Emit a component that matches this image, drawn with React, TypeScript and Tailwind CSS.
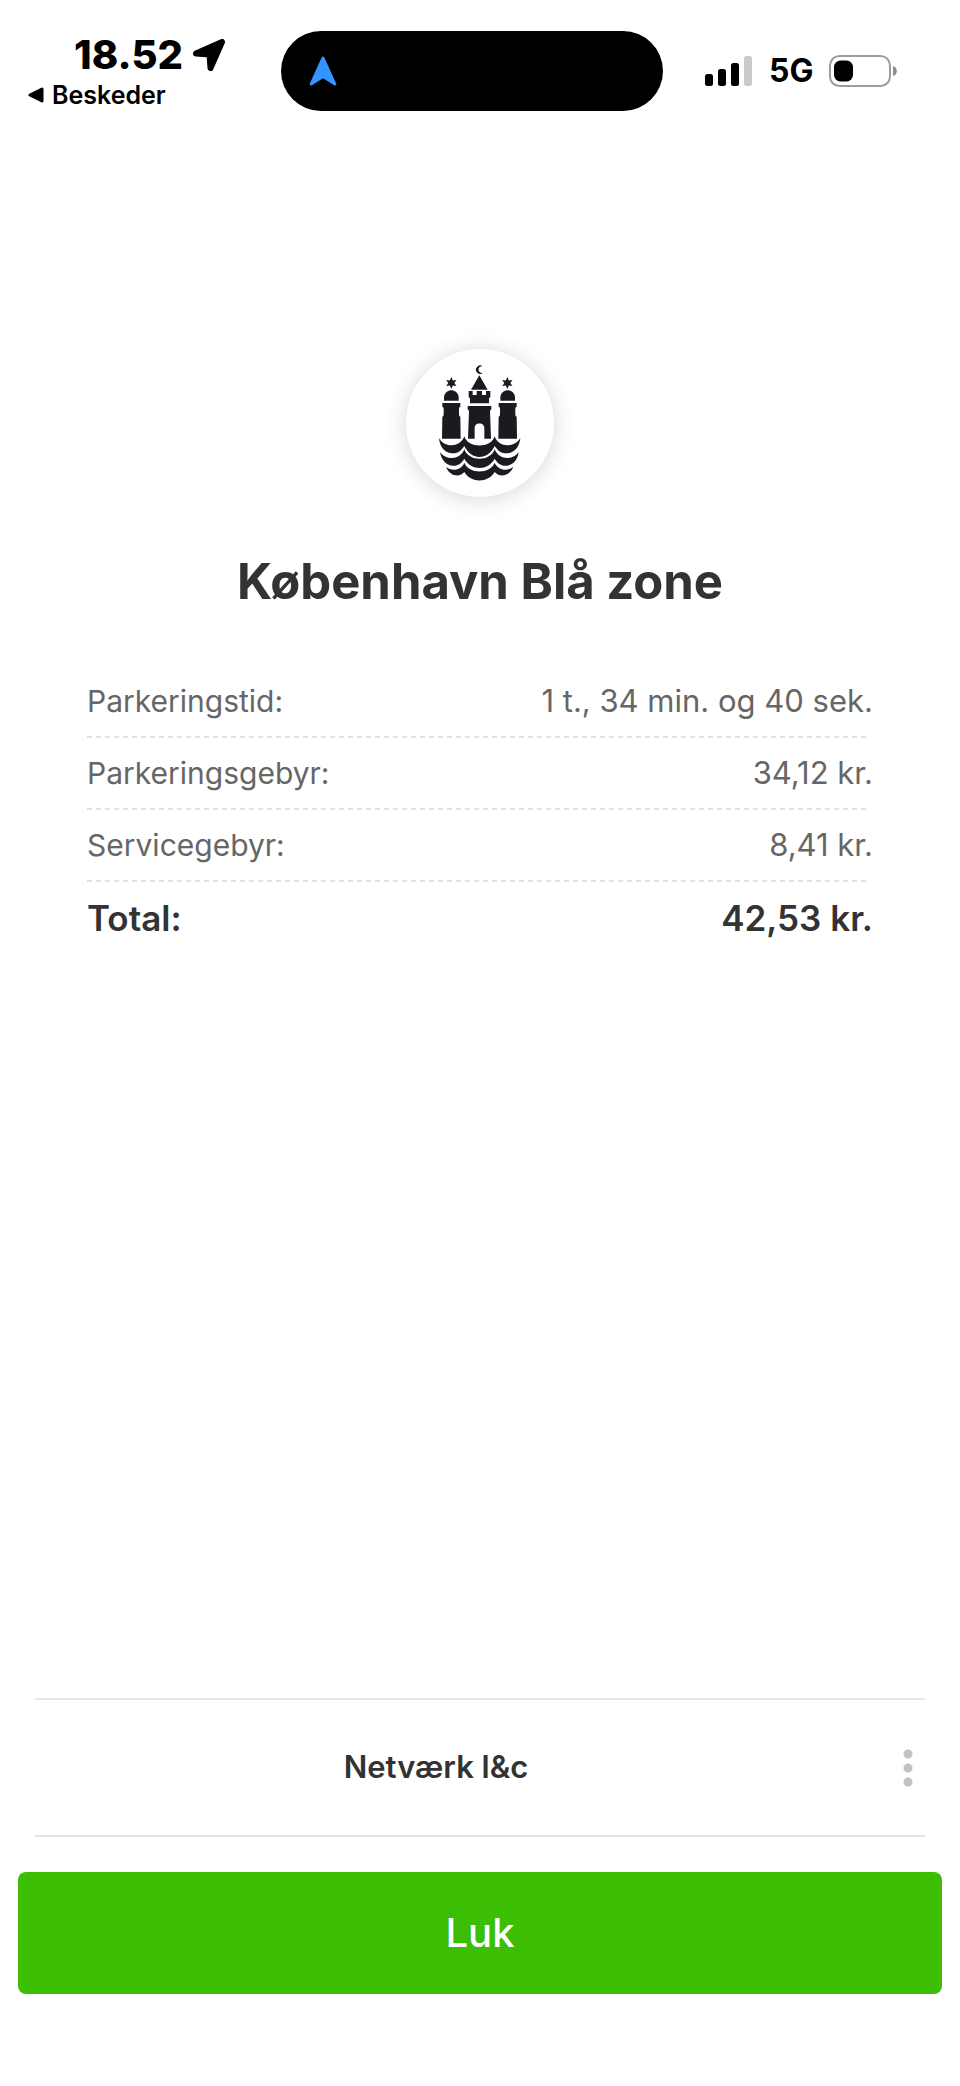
import type { ReactNode } from "react";

const fees: { label: string; value: string }[] = [
  { label: "Parkeringstid:", value: "1 t., 34 min. og 40 sek." },
  { label: "Parkeringsgebyr:", value: "34,12 kr." },
  { label: "Servicegebyr:", value: "8,41 kr." },
];

function LocationArrow() {
  return (
    <svg viewBox="0 0 32 32" className="h-8 w-8" aria-hidden="true">
      <path
        d="M29 3 L17.500 29 L16.500 15.500 L3 14.500 Z"
        fill="black"
        stroke="black"
        strokeWidth="6"
        strokeLinejoin="round"
      />
    </svg>
  );
}

function NavigationArrow() {
  return (
    <svg viewBox="0 0 28 30" className="h-[30px] w-7" aria-hidden="true">
      <path
        d="M14 2 L25.8 28 L14 20.5 L2.2 28 Z"
        fill="#3395ff"
        stroke="#3395ff"
        strokeWidth="3"
        strokeLinejoin="round"
      />
    </svg>
  );
}

function Signal() {
  return (
    <svg viewBox="0 0 48 30" className="h-[30px] w-12" aria-hidden="true">
      <rect x="0" y="18" width="8" height="12" rx="2.5" />
      <rect x="13" y="13" width="8" height="17" rx="2.5" />
      <rect x="26" y="7" width="8" height="23" rx="2.5" />
      <rect x="39" y="0" width="8" height="30" rx="2.5" fill="#cbcbcb" />
    </svg>
  );
}

function Battery() {
  return (
    <svg viewBox="0 0 68 32" className="h-8 w-[68px]" aria-hidden="true">
      <rect x="1" y="1" width="60" height="30" rx="9.5" fill="none" stroke="#9c9c9c" strokeWidth="2" />
      <rect x="5" y="5.500" width="19" height="21" rx="6.500" />
      <path d="M64 11 C69 12 69 20 64 21 Z" fill="#8c8c8c" />
    </svg>
  );
}

function Star({ x, y }: { x: number; y: number }) {
  return (
    <path
      transform={`translate(${x} ${y})`}
      d="M0 -18 L4.500 -7.500 L15.500 -9 L9 0 L15.500 9 L4.500 7.500 L0 18 L-4.500 7.500 L-15.500 9 L-9 0 L-15.500 -9 L-4.500 -7.500 Z"
    />
  );
}

function SideTower({ x }: { x: number }) {
  return (
    <g transform={`translate(${x} 0)`}>
      <path d="M-22 211 V199 C-20 187 -10 180 0 180 C10 180 20 187 22 199 V211 Z" />
      <path d="M-27 218 H27 V229 L23 232 V255 L27 260 L28 325 H-28 L-27 260 L-23 255 V232 L-27 229 Z" />
    </g>
  );
}

function CastleCrest() {
  return (
    <svg viewBox="48 56 444 444" className="h-full w-full" fill="#1b1a20" role="img" aria-label="København">
      <path d="M278 108 A12.500 12.500 0 1 0 279 127 A10 10 0 1 1 278 108 Z" />
      <Star x={184} y={158} />
      <Star x={352} y={158} />
      <SideTower x={184} />
      <SideTower x={353} />
      <path d="M268 135 L293 178 H243 Z" />
      <path d="M236 182 H248 V194 H260 V182 H276 V194 H288 V182 H301 V201 L297 204 V219 H240 V204 L236 201 Z" />
      <path d="M233 227 H304 V237 L300 241 L303 325 H283 V292 C283 275 254 275 254 292 V325 H234 L237 241 L233 237 Z" />
      <path d="M147 323 C162 352 210 354 223 318 C234 355 303 355 314 318 C326 354 375 352 391 323 C389 347 375 367 352 369 C337 370 325 364 314 347 C293 391 244 391 223 347 C212 364 200 370 185 369 C162 367 149 347 147 323 Z" />
      <path d="M150 365 C168 391 211 390 223 357 C236 395 301 395 314 357 C326 390 370 391 386 365 C383 387 371 404 350 406 C335 407 324 401 314 385 C293 422 244 422 223 385 C213 401 202 407 187 406 C166 404 154 387 150 365 Z" />
      <path d="M168 410 C186 424 214 420 223 397 C236 432 301 432 314 397 C324 420 351 424 370 410 C361 433 333 446 314 425 C294 459 243 459 223 425 C204 446 177 433 168 410 Z" />
    </svg>
  );
}

function FeeRow({ label, children }: { label: string; children: ReactNode }) {
  return (
    <div className="flex h-[70px] items-center justify-between text-[#666666]">
      <dt className="text-[30px]">{label}</dt>
      <dd className="text-[31px]">{children}</dd>
    </div>
  );
}

export default function App() {
  return (
    <div className="flex min-h-screen flex-col bg-white font-['Inter','Liberation_Sans',sans-serif] text-[#333333]">
      <header className="grid grid-cols-[281fr_382fr_297fr] pt-[31px] text-black">
        <div className="flex flex-col">
          <div className="flex h-12 items-center gap-2.5 pl-[74px]">
            <time className="text-[40px] leading-[48px] font-extrabold">18.52</time>
            <LocationArrow />
          </div>
          <a href="#beskeder" className="flex h-8 items-center gap-2 pl-7 text-[25px] leading-8 font-semibold">
            <svg viewBox="0 0 16 16" className="h-4 w-4" aria-hidden="true">
              <path d="M2 8 L14 2 V14 Z" stroke="black" strokeWidth="3" strokeLinejoin="round" />
            </svg>
            Beskeder
          </a>
        </div>
        <div className="flex h-20 items-center rounded-full bg-black pl-7">
          <NavigationArrow />
        </div>
        <div className="flex h-20 items-center pl-[42px]">
          <Signal />
          <span className="ml-4 text-[32px] leading-[40px] font-bold">5G</span>
          <span className="ml-4">
            <Battery />
          </span>
        </div>
      </header>

      <main className="flex flex-col px-[87px] pt-[238px]">
        <div className="h-[148px] w-[148px] self-center rounded-full bg-white shadow-[0_2px_22px_rgba(0,0,0,0.16)]">
          <CastleCrest />
        </div>
        <h1 className="mt-[53px] text-center text-[49px] leading-[64px] font-bold">København Blå zone</h1>
        <dl className="mt-[52px]">
          {fees.map((fee) => (
            <div key={fee.label}>
              <FeeRow label={fee.label}>{fee.value}</FeeRow>
              <div className="mr-1 h-0.5 bg-[repeating-linear-gradient(to_right,#e2e2e2_0px,#e2e2e2_5px,transparent_5px,transparent_9px)]" />
            </div>
          ))}
          <div className="flex h-[72px] items-center justify-between text-[35px] font-semibold">
            <dt>Total:</dt>
            <dd>42,53 kr.</dd>
          </div>
        </dl>
      </main>

      <footer className="mt-auto px-[18px] pb-[92px]">
        <div className="mx-[17px] flex h-[139px] items-center border-y-2 border-[#e5e5e5]">
          <p className="flex-1 text-center text-[31px] font-semibold">Netværk l&amp;c</p>
          <button type="button" aria-label="Flere valg" className="flex h-16 w-[88px] items-center justify-end pr-3">
            <svg viewBox="0 0 10 38" className="h-[38px] w-2.5" fill="#c2c2c2" aria-hidden="true">
              <circle cx="5" cy="5" r="4.500" />
              <circle cx="5" cy="19" r="4.500" />
              <circle cx="5" cy="33" r="4.500" />
            </svg>
          </button>
        </div>
        <button
          type="button"
          className="mt-[35px] h-[122px] w-full rounded-lg bg-[#3cbe05] text-[40px] font-medium text-white"
        >
          Luk
        </button>
      </footer>
    </div>
  );
}
